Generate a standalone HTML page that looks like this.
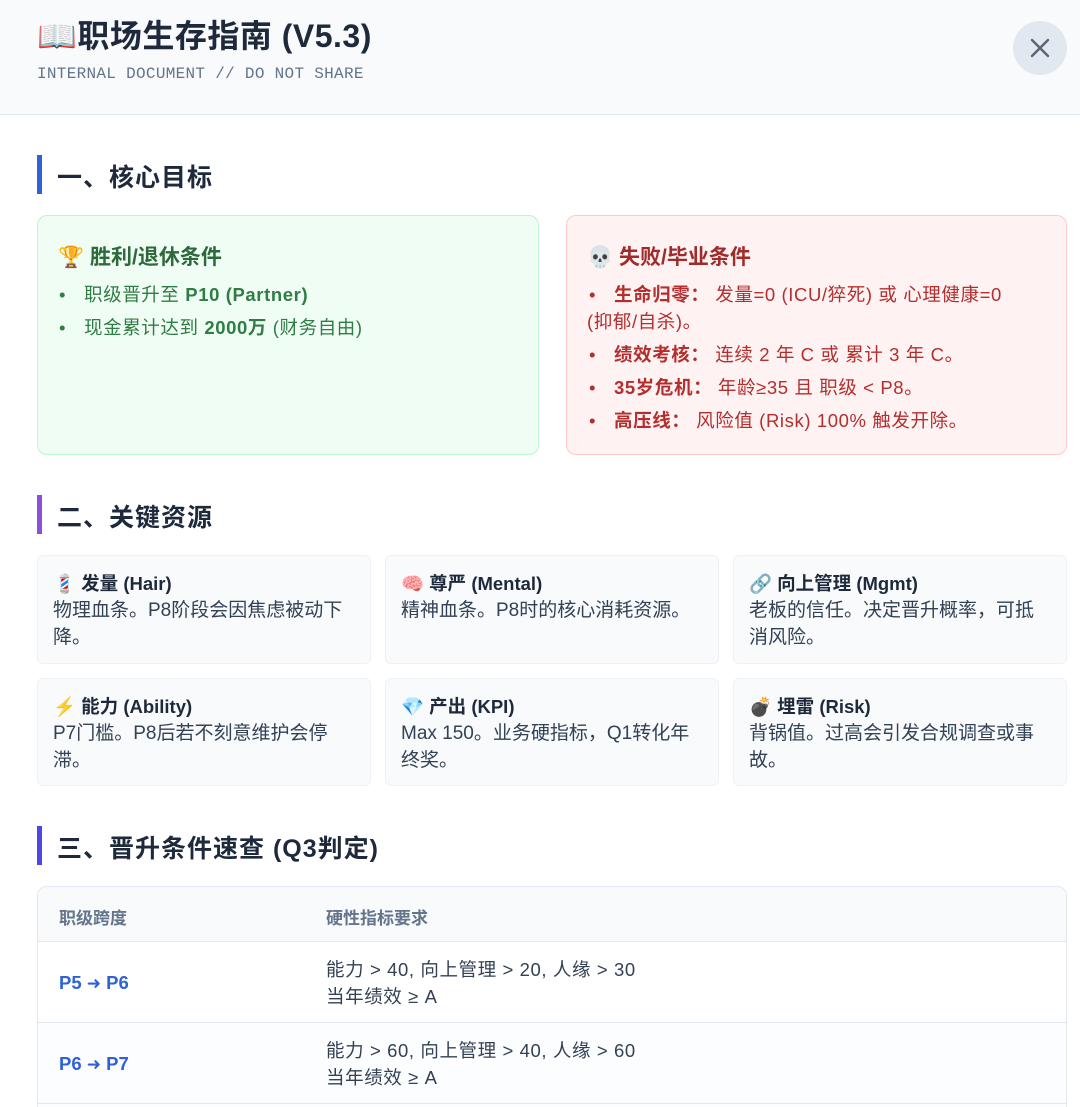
<!DOCTYPE html>
<html><head><meta charset="utf-8"><style>
*{margin:0;padding:0;box-sizing:border-box}
html,body{width:1080px;height:1107px;overflow:hidden}
body{background:#fff;font-family:"Liberation Sans","Noto Sans CJK SC",sans-serif;color:#1e293b;position:relative}
.abs{position:absolute}
.hdr{left:0;top:0;width:1080px;height:115px;background:#f8fafc;border-bottom:1px solid #e2e8f0}
.title{left:37px;top:11px;font-size:32px;font-weight:bold;color:#1e293b;white-space:nowrap;letter-spacing:.5px}
.sub{left:37px;top:65px;font-family:"Liberation Mono",monospace;font-size:16px;color:#64748b;letter-spacing:.3px}
.close{left:1013px;top:21px;width:54px;height:54px;border-radius:50%;background:#e2e8f0}
.h2{font-size:25px;font-weight:bold;color:#1e293b;white-space:nowrap;letter-spacing:1px}
.bar{width:5px;height:39px}
.card{border-radius:10px}
.ct{font-size:21px;font-weight:bold;white-space:nowrap}
.li{font-size:18.5px;line-height:27px;white-space:nowrap;letter-spacing:.6px}
.li .b{display:inline-block;width:27px;padding-left:2px}
.g{background:#f8fafc;border:1px solid #eef1f5;border-radius:6px}
.g .t{position:absolute;left:15px;top:14px;font-size:18.5px;font-weight:bold;color:#1e293b;white-space:nowrap}
.g .d{position:absolute;left:15px;top:41px;width:320px;font-size:19px;line-height:27px;color:#334155;white-space:nowrap}
.tbl{left:37px;top:886px;width:1030px;height:230px;border:1px solid #e2e8f0;border-radius:10px;overflow:hidden}
.th{font-size:17px;font-weight:bold;color:#64748b;white-space:nowrap}
.pl{font-size:18.5px;font-weight:bold;color:#2f62d6;white-space:nowrap}
.req{font-size:18.5px;line-height:27px;color:#334155;white-space:nowrap;letter-spacing:.6px}
</style></head><body>
<div class="abs hdr"></div>
<div class="abs title">📖职场生存指南 (V5.3)</div>
<div class="abs sub">INTERNAL DOCUMENT // DO NOT SHARE</div>
<div class="abs close"><svg width="54" height="54" viewBox="0 0 54 54"><path d="M19 19L35 35M35 19L19 35" stroke="#5b6475" stroke-width="2.4" stroke-linecap="round"/></svg></div>

<div class="abs bar" style="left:37px;top:155px;background:#2f62d6"></div>
<div class="abs h2" style="left:57px;top:158px">一、核心目标</div>

<div class="abs card" style="left:37px;top:215px;width:502px;height:240px;background:#f0fdf4;border:1.5px solid #bbf7d0"></div>
<div class="abs ct" style="left:58px;top:241px;color:#2d6a3b">🏆 胜利/退休条件</div>
<div class="abs li" style="left:57px;top:281px;color:#2f7d45"><span class="b">•</span>职级晋升至 <b>P10 (Partner)</b></div>
<div class="abs li" style="left:57px;top:314px;color:#2f7d45"><span class="b">•</span>现金累计达到 <b>2000万</b> (财务自由)</div>

<div class="abs card" style="left:566px;top:215px;width:501px;height:240px;background:#fef2f2;border:1.5px solid #fecaca"></div>
<div class="abs ct" style="left:587px;top:241px;color:#a12a2a">💀 失败/毕业条件</div>
<div class="abs li" style="left:587px;top:281px;color:#b42e2e"><span class="b">•</span><b>生命归零：</b> 发量=0 (ICU/猝死) 或 心理健康=0<br>(抑郁/自杀)。</div>
<div class="abs li" style="left:587px;top:341px;color:#b42e2e"><span class="b">•</span><b>绩效考核：</b> 连续 2 年 C 或 累计 3 年 C。</div>
<div class="abs li" style="left:587px;top:374px;color:#b42e2e"><span class="b">•</span><b>35岁危机：</b> 年龄≥35 且 职级 &lt; P8。</div>
<div class="abs li" style="left:587px;top:407px;color:#b42e2e"><span class="b">•</span><b>高压线：</b> 风险值 (Risk) 100% 触发开除。</div>

<div class="abs bar" style="left:37px;top:495px;background:#8b4fe0"></div>
<div class="abs h2" style="left:57px;top:498px">二、关键资源</div>

<div class="abs g" style="left:37px;top:555px;width:334px;height:109px"><div class="t">💈 发量 (Hair)</div><div class="d">物理血条。P8阶段会因焦虑被动下<br>降。</div></div>
<div class="abs g" style="left:385px;top:555px;width:334px;height:109px"><div class="t">🧠 尊严 (Mental)</div><div class="d">精神血条。P8时的核心消耗资源。</div></div>
<div class="abs g" style="left:733px;top:555px;width:334px;height:109px"><div class="t">🔗 向上管理 (Mgmt)</div><div class="d">老板的信任。决定晋升概率，可抵<br>消风险。</div></div>
<div class="abs g" style="left:37px;top:678px;width:334px;height:108px"><div class="t">⚡ 能力 (Ability)</div><div class="d">P7门槛。P8后若不刻意维护会停<br>滞。</div></div>
<div class="abs g" style="left:385px;top:678px;width:334px;height:108px"><div class="t">💎 产出 (KPI)</div><div class="d">Max 150。业务硬指标，Q1转化年<br>终奖。</div></div>
<div class="abs g" style="left:733px;top:678px;width:334px;height:108px"><div class="t">💣 埋雷 (Risk)</div><div class="d">背锅值。过高会引发合规调查或事<br>故。</div></div>

<div class="abs bar" style="left:37px;top:826px;background:#4f46e5"></div>
<div class="abs h2" style="left:57px;top:829px">三、晋升条件速查 (Q3判定)</div>

<div class="abs tbl">
 <div class="abs" style="left:0;top:0;width:1030px;height:55px;background:#f8fafc;border-bottom:1px solid #e2e8f0"></div>
 <div class="abs th" style="left:21px;top:17px">职级跨度</div>
 <div class="abs th" style="left:288px;top:17px">硬性指标要求</div>
 <div class="abs" style="left:0;top:135px;width:1030px;border-top:1px solid #e2e8f0"></div>
 <div class="abs" style="left:0;top:136px;width:1030px;height:100px;background:#fcfdfe"></div>
 <div class="abs pl" style="left:21px;top:85px">P5 <span style="font-family:'DejaVu Sans';font-size:17px">➜</span> P6</div>
 <div class="abs req" style="left:288px;top:69px">能力 &gt; 40, 向上管理 &gt; 20, 人缘 &gt; 30<br>当年绩效 ≥ A</div>
 <div class="abs pl" style="left:21px;top:166px">P6 <span style="font-family:'DejaVu Sans';font-size:17px">➜</span> P7</div>
 <div class="abs req" style="left:288px;top:150px">能力 &gt; 60, 向上管理 &gt; 40, 人缘 &gt; 60<br>当年绩效 ≥ A</div>
 <div class="abs" style="left:0;top:216px;width:1030px;border-top:1px solid #e2e8f0"></div>
</div>
</body></html>
